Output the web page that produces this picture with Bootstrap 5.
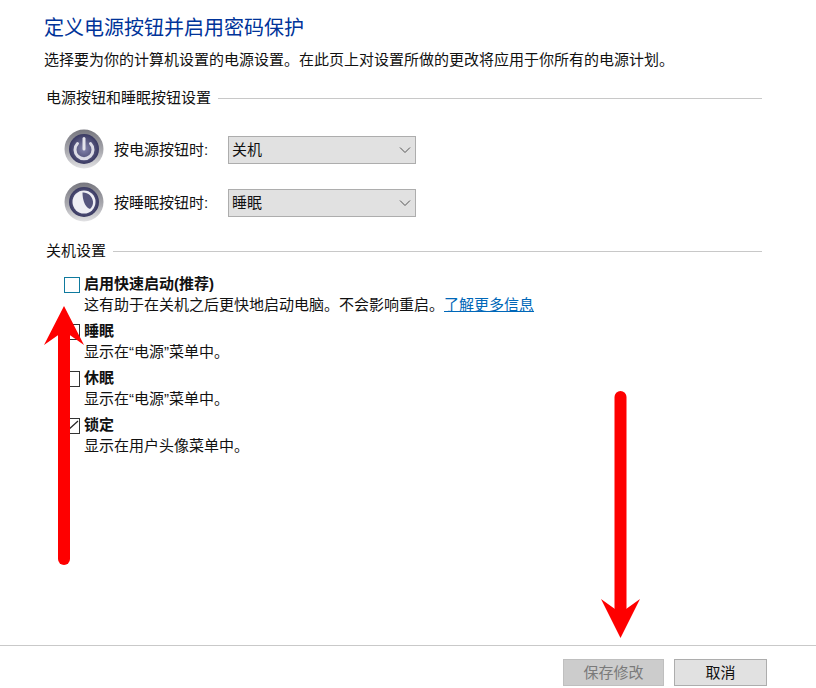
<!DOCTYPE html>
<html lang="zh-CN">
<head>
<meta charset="utf-8">
<title>电源设置</title>
<link rel="stylesheet" href="https://cdn.jsdelivr.net/npm/bootstrap@5.3.0/dist/css/bootstrap.min.css">
<style>
html,body{height:100%;margin:0}
body{font-family:"Liberation Sans","Noto Sans CJK SC",sans-serif;font-size:15px;line-height:20px;color:#111;background:#fff;overflow:hidden}
.page-wrap{width:816px;height:688px;position:relative;overflow:hidden}
.main-area{height:645px;padding:16px 54px 0 44px}
.page-title{font-size:20px;line-height:24px;font-weight:400;color:#003399;margin:0 0 10px}
.intro{margin:0 0 16px;line-height:20px}
.group-head{height:24px;padding-left:2px;gap:7px}
.group-line{height:1px;background:#c8c8c8}
.power-rows{padding:14px 0 0 20px;height:129px}
.power-row{height:52px;margin-bottom:1px}
.round-icon{width:40px;height:40px;flex:none;margin:0 10px 2px 0}
.row-label{width:114px}
.fake-select{width:188px;height:28px;background:#e1e1e1;border:1px solid #adadad;padding:0 4px 0 3px;display:flex;align-items:center;justify-content:space-between;color:#111}
.opts{padding-left:20px;margin-top:11px}
.opt-item{height:47px;gap:4px}
.box{width:16px;height:16px;flex:none;border:1px solid #333;background:#fff;margin-top:3px}
.box-first{border-color:#0f7a9e}
.opt-title{font-weight:700;line-height:20px}
.opt-desc{line-height:20px;margin-top:1px}
.more-link{color:#0067b8;text-decoration:underline}
.foot-bar{height:43px;border-top:1px solid #c9c9c9;padding:13px 49px 0 0;gap:10px}
.foot-btn{height:27px;display:flex;align-items:center;justify-content:center;border:1px solid #adadad;background:#e1e1e1;color:#111}
.foot-save{width:101px;background:#cccccc;border-color:#bfbfbf;color:#7a7a7a}
.foot-cancel{width:93px}
.red-arrow{position:absolute;pointer-events:none}
.check-svg{display:block}
</style>
</head>
<body>
<div class="page-wrap">
  <div class="main-area">
    <h1 class="page-title">定义电源按钮并启用密码保护</h1>
    <p class="intro">选择要为你的计算机设置的电源设置。在此页上对设置所做的更改将应用于你所有的电源计划。</p>
    <div class="group-head d-flex align-items-center"><span>电源按钮和睡眠按钮设置</span><div class="group-line flex-grow-1"></div></div>
    <div class="power-rows">
      <div class="power-row d-flex align-items-center">
        <svg class="round-icon" viewBox="0 0 40 40"><defs><linearGradient id="rim" x1="0" y1="0" x2="0" y2="1"><stop offset="0" stop-color="#77777f"/><stop offset=".55" stop-color="#a8a8ae"/><stop offset="1" stop-color="#e2e2e4"/></linearGradient><radialGradient id="core" cx=".5" cy=".5" r=".55"><stop offset="0" stop-color="#8585ad"/><stop offset="1" stop-color="#32325a"/></radialGradient></defs><circle cx="20" cy="20" r="19.500" fill="url(#rim)"/><circle cx="20" cy="20" r="15" fill="url(#core)"/><path d="M13.500 14.500a9 9 0 1 0 13 0" fill="none" stroke="#dcdce6" stroke-width="3" stroke-linecap="round"/><path d="M20 9.500v10.500" stroke="#e4e4ec" stroke-width="3" stroke-linecap="round"/></svg>
        <span class="row-label">按电源按钮时:</span>
        <div class="fake-select"><span>关机</span><svg width="12" height="8" viewBox="0 0 12 8"><path d="M1 1.500l5 5 5-5" fill="none" stroke="#555" stroke-width="1"/></svg></div>
      </div>
      <div class="power-row d-flex align-items-center">
        <svg class="round-icon" viewBox="0 0 40 40"><circle cx="20" cy="20" r="19.500" fill="url(#rim)"/><circle cx="20" cy="20" r="15" fill="url(#core)"/><circle cx="20" cy="20" r="11.500" fill="#eeeef4"/><path d="M18.500 10.500c5-.5 10 3.500 10.500 9 .3 3-1 6-3 7.500-3-1-5-4-6-7-1-3-1.500-6-1.500-9.500z" fill="#55557d"/></svg>
        <span class="row-label">按睡眠按钮时:</span>
        <div class="fake-select"><span>睡眠</span><svg width="12" height="8" viewBox="0 0 12 8"><path d="M1 1.500l5 5 5-5" fill="none" stroke="#555" stroke-width="1"/></svg></div>
      </div>
    </div>
    <div class="group-head d-flex align-items-center"><span>关机设置</span><div class="group-line flex-grow-1"></div></div>
    <div class="opts">
      <div class="opt-item d-flex"><div class="box box-first"></div><div><div class="opt-title">启用快速启动(推荐)</div><div class="opt-desc">这有助于在关机之后更快地启动电脑。不会影响重启。<a href="#" class="more-link">了解更多信息</a></div></div></div>
      <div class="opt-item d-flex"><div class="box"></div><div><div class="opt-title">睡眠</div><div class="opt-desc">显示在“电源”菜单中。</div></div></div>
      <div class="opt-item d-flex"><div class="box"></div><div><div class="opt-title">休眠</div><div class="opt-desc">显示在“电源”菜单中。</div></div></div>
      <div class="opt-item d-flex"><div class="box"><svg class="check-svg" width="14" height="14" viewBox="0 0 14 14"><path d="M2 12L13 2" stroke="#222" stroke-width="1.200" fill="none"/></svg></div><div><div class="opt-title">锁定</div><div class="opt-desc">显示在用户头像菜单中。</div></div></div>
    </div>
  </div>
  <div class="foot-bar d-flex justify-content-end">
    <div class="foot-btn foot-save">保存修改</div>
    <div class="foot-btn foot-cancel">取消</div>
  </div>
  <svg class="red-arrow" style="left:44px;top:306px" width="40" height="262" viewBox="0 0 40 262"><path d="M20 253V25" stroke="#fe0000" stroke-width="12" stroke-linecap="round"/><path d="M20 0L40 39 20 25 0 39z" fill="#fe0000"/></svg>
  <svg class="red-arrow" style="left:600px;top:388px" width="41" height="252" viewBox="0 0 41 252"><path d="M20.500 9V225" stroke="#fe0000" stroke-width="12" stroke-linecap="round"/><path d="M20.500 250L40 211 20.500 225 1 211z" fill="#fe0000"/></svg>
</div>
</body>
</html>
